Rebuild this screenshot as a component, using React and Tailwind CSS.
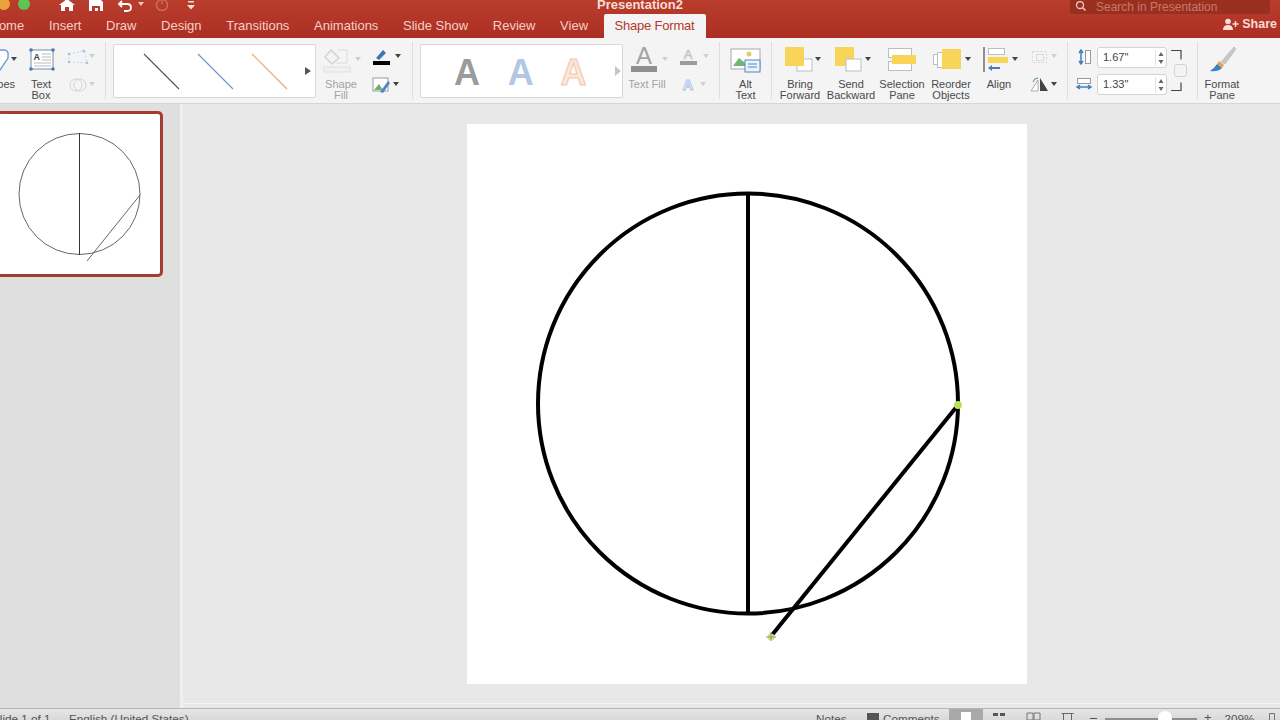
const tabs = ["Home", "Insert", "Draw", "Design", "Transitions", "Animations", "Slide Show", "Review", "View"];

// svg whose viewBox uses the coordinates of the screen, so shapes can be read off the picture
function Art({ x, y = 38, w, h = 41, children, className = "" }) {
  return (
    <svg width={w} height={h} viewBox={`${x} ${y} ${w} ${h}`} className={`block shrink-0 ${className}`}>
      {children}
    </svg>
  );
}

function Caret({ x, y, fill = "#444" }) {
  return <path d={`M${x - 3} ${y - 2}h6l-3 4z`} fill={fill} />;
}

function Cell({ w, label, muted, children }) {
  return (
    <div className="flex shrink-0 flex-col items-center" style={{ width: w }}>
      {children}
      <div className={`text-center text-[11px] leading-[11px] ${muted ? "text-[#a3a3a3]" : "text-[#4a4a4a]"}`}>
        {label.map((line) => (
          <div key={line} className="whitespace-nowrap">{line}</div>
        ))}
      </div>
    </div>
  );
}

function Sep() {
  return <div className="my-[4px] w-px shrink-0 bg-[#dedede]" />;
}

function Spinner() {
  return (
    <svg width="10" height="16" viewBox="0 0 10 16" className="shrink-0">
      <path d="M0.5 0v16" stroke="#e2e2e2" />
      <path d="M3.5 6l2.5-4 2.5 4z M3.5 10l2.5 4 2.5-4z" fill="#666" />
    </svg>
  );
}

function SizeInput({ value }) {
  return (
    <div className="flex h-[21px] w-[70px] items-center justify-between rounded-[3px] border border-[#d4d4d4] bg-white pl-[5px] pr-[1px] text-[11px] text-[#444]">
      {value}
      <Spinner />
    </div>
  );
}

function TitleBar() {
  return (
    <div className="grid h-[14px] grid-cols-[1fr_auto_1fr] overflow-hidden">
      <Art x={0} y={0} w={210} h={14}>
        <circle cx="4" cy="4" r="6" fill="#e9a23b" />
        <circle cx="24" cy="4" r="6" fill="#5fc454" />
        <path d="M59 5l8-6 8 6h-2v6h-4V7h-4v4h-4V5z" fill="#fff" />
        <path d="M89 0h12l2 2v9H89z" fill="#fff" />
        <path d="M92 6h8v5h-8z" fill="#b5382a" />
        <path d="M95 8h3v3h-3z" fill="#fff" />
        <path d="M122 1l-3 3 3 3M119 4h8q4 0 4 3.500t-4 3.500h-3" fill="none" stroke="#fff" strokeWidth="1.800" />
        <Caret x={141} y={4} fill="#f2c9c0" />
        <circle cx="162" cy="5" r="5.500" fill="none" stroke="#cf6f5e" strokeWidth="1.400" />
        <path d="M162 -1v5" stroke="#cf6f5e" strokeWidth="1.400" />
        <path d="M188 1h6v1.500h-6z M187 5h8l-4 4.500z" fill="#f7ddd6" />
      </Art>
      <div className="text-[13px] font-bold leading-[10px] text-[#f9dcd4]">Presentation2</div>
      <div className="flex justify-end pr-[10px]">
        <div className="flex h-[14px] w-[200px] items-center rounded-b-[3px] bg-[#99301f] pl-[5px] text-[12px] text-[#c9776a]">
          <svg width="12" height="12" viewBox="0 0 12 12" className="mr-[9px] shrink-0">
            <circle cx="5" cy="4" r="3.500" fill="none" stroke="#f2c9c0" strokeWidth="1.300" />
            <path d="M7.500 6.500l3 3" stroke="#f2c9c0" strokeWidth="1.500" />
          </svg>
          Search in Presentation
        </div>
      </div>
    </div>
  );
}

function TabRow() {
  return (
    <div className="flex h-[24px] items-end text-[13px] leading-[24px] text-[#f6cfc6]">
      <div className="-ml-[10.500px] flex gap-[24.700px]">
        {tabs.map((tab) => (
          <div key={tab} className="whitespace-nowrap">{tab}</div>
        ))}
      </div>
      <div className="ml-[15.500px] w-[102px] rounded-t-[2px] bg-[#f4f4f4] text-center tracking-[-0.2px] text-[#b5382a]">Shape Format</div>
      <div className="mb-[2px] ml-auto flex items-center gap-[3px] pr-[3px] text-[12.500px] font-bold text-[#f9dcd4]">
        <svg width="16" height="12" viewBox="0 0 16 12">
          <circle cx="5" cy="3.500" r="2.800" fill="#f9dcd4" />
          <path d="M0 12q0-5 5-5t5 5z" fill="#f9dcd4" />
          <path d="M12.500 3v6M9.500 6h6" stroke="#f9dcd4" strokeWidth="1.500" />
        </svg>
        Share
      </div>
    </div>
  );
}

function Ribbon() {
  return (
    <div className="flex h-[66px] border-b border-[#d6d6d6] bg-[#f4f4f4]">
      <div className="flex w-[26px] shrink-0 flex-col items-end overflow-hidden">
        <Art x={0} w={26}>
          <path d="M-6 50h10a4 4 0 0 1 4 5v3l-8 12h-6z" fill="#fff" stroke="#6d97cf" strokeWidth="1.300" />
          <Caret x={14} y={59} />
        </Art>
        <div className="pr-[11px] text-[11px] leading-[11px] text-[#4a4a4a]">Shapes</div>
      </div>
      <Cell w={30} label={["Text", "Box"]}>
        <Art x={26} w={30}>
          <rect x="31" y="50" width="22" height="19" fill="#fff" stroke="#7b8ba6" />
          <text x="33.500" y="60" fontSize="9" fontWeight="700" fill="#444" fontFamily="Liberation Sans">A</text>
          <path d="M42 54h9M42 57h9M42 60h9M34 63h17M34 66h17" stroke="#aaa" strokeWidth="0.800" />
          <g fill="#4c77b2">
            <circle cx="31" cy="50" r="1.800" />
            <circle cx="53" cy="50" r="1.800" />
            <circle cx="31" cy="69" r="1.800" />
            <circle cx="53" cy="69" r="1.800" />
          </g>
        </Art>
      </Cell>
      <Art x={56} w={44} h={65}>
        <path d="M69 54l15-3 3 12-18-1z" fill="none" stroke="#c5d3e6" strokeDasharray="2 2" />
        <g fill="#a9c0de">
          <circle cx="69" cy="54" r="1.300" />
          <circle cx="84" cy="51" r="1.300" />
          <circle cx="87" cy="63" r="1.300" />
          <circle cx="69" cy="62" r="1.300" />
        </g>
        <Caret x={92} y={56} fill="#cfcfcf" />
        <circle cx="76" cy="85" r="6" fill="none" stroke="#d4d4d4" />
        <circle cx="80" cy="85" r="6" fill="none" stroke="#d4d4d4" />
        <Caret x={92} y={84} fill="#cfcfcf" />
      </Art>
      <div className="w-[5px] shrink-0" />
      <Sep />
      <div className="w-[7px] shrink-0" />
      <div className="mt-[6px] h-[54px] w-[203px] shrink-0 rounded-[2px] border border-[#d8d8d8] bg-white">
        <Art x={113} y={44} w={201} h={52}>
          <path d="M143 53l35 35" stroke="#555" strokeWidth="1.100" />
          <path d="M197 53l35 35" stroke="#7393c4" strokeWidth="1.100" />
          <path d="M251 53l35 35" stroke="#e2a86f" strokeWidth="1.100" />
          <path d="M304 66l6 4-6 4z" fill="#555" />
        </Art>
      </div>
      <Cell w={50} label={["Shape", "Fill"]} muted>
        <Art x={316} w={50}>
          <path d="M331 50l8 8-7 6-7-7z" fill="none" stroke="#d2d2d2" strokeWidth="1.400" />
          <path d="M338 50h9v13h-11" fill="none" stroke="#dcdcdc" />
          <rect x="324" y="67" width="26" height="5" fill="#f1f1f1" stroke="#dedede" />
          <Caret x={358} y={59} fill="#cfcfcf" />
        </Art>
      </Cell>
      <Art x={366} w={46} h={65}>
        <path d="M376 58l7-8 3 3-7 7z" fill="#3f74b8" />
        <rect x="373" y="61" width="17" height="4" fill="#000" />
        <Caret x={398} y={56} />
        <rect x="373" y="78" width="15" height="13" fill="#fff" stroke="#999" />
        <path d="M374 90l5-6 4 6z" fill="#6fb06a" />
        <path d="M380 92l8-11 2 2-7 10z" fill="#4f86c6" />
        <Caret x={396} y={84} />
      </Art>
      <Sep />
      <div className="w-[7px] shrink-0" />
      <div className="mt-[6px] flex h-[54px] w-[203px] shrink-0 items-center rounded-[2px] border border-[#d8d8d8] bg-white pl-[33px] pt-[3px] text-[36px] font-bold leading-[48px]">
        <span className="w-[55px] text-[#9b9b9b]">A</span>
        <span className="w-[54px] text-[#b3c6e4]">A</span>
        <span className="w-[55px] text-[#fbe6d8] [-webkit-text-stroke:1px_#f2c8ac]">A</span>
        <svg width="8" height="10" viewBox="0 0 8 10" className="-mt-[3px]"><path d="M1 0l6 5-6 5z" fill="#c4c4c4" /></svg>
      </div>
      <Cell w={48} label={["Text Fill"]} muted>
        <Art x={623} w={48}>
          <text x="644" y="64" fontSize="24" textAnchor="middle" fill="#a3a3a3" fontFamily="Liberation Sans">A</text>
          <rect x="631" y="66" width="26" height="6" fill="#8f8f8f" />
          <Caret x={665} y={59} fill="#cfcfcf" />
        </Art>
      </Cell>
      <Art x={671} w={48} h={65}>
        <text x="688" y="59" fontSize="13" textAnchor="middle" fill="#f4f4f4" stroke="#c4c4c4" strokeWidth="0.700" fontFamily="Liberation Sans">A</text>
        <rect x="680" y="61" width="17" height="4" fill="#9c9c9c" />
        <Caret x={706} y={56} fill="#cfcfcf" />
        <text x="688" y="90" fontSize="15" fontWeight="700" textAnchor="middle" fill="#e6eef8" stroke="#a8c4e6" strokeWidth="0.800" fontFamily="Liberation Sans">A</text>
        <Caret x={703} y={84} fill="#cfcfcf" />
      </Art>
      <Sep />
      <Cell w={51} label={["Alt", "Text"]}>
        <Art x={720} w={51}>
          <rect x="731" y="49" width="29" height="20" fill="#fff" stroke="#a8a8a8" />
          <path d="M733 66l6-8 5 4 3 4z" fill="#6fb76a" />
          <circle cx="749" cy="54" r="2.500" fill="#e8cc6a" />
          <rect x="745" y="60" width="15" height="12" fill="#eaf2fb" stroke="#4f86c6" />
          <path d="M748 64h9M748 67h9" stroke="#4f86c6" />
        </Art>
      </Cell>
      <Sep />
      <Cell w={56} label={["Bring", "Forward"]}>
        <Art x={772} w={56}>
          <rect x="797" y="59" width="15" height="12" fill="#fff" stroke="#bdbdbd" />
          <rect x="785" y="47" width="19" height="19" fill="#f8d558" />
          <Caret x={818} y={59} />
        </Art>
      </Cell>
      <Cell w={46} label={["Send", "Backward"]}>
        <Art x={828} w={46}>
          <rect x="835" y="47" width="19" height="19" fill="#f8d558" />
          <rect x="846" y="59" width="15" height="12" fill="#fff" stroke="#bdbdbd" />
          <Caret x={868} y={59} />
        </Art>
      </Cell>
      <Cell w={56} label={["Selection", "Pane"]}>
        <Art x={874} w={56}>
          <rect x="888.500" y="48.500" width="23" height="9" fill="#fff" stroke="#bdbdbd" />
          <rect x="888.500" y="61.500" width="23" height="9" fill="#fff" stroke="#bdbdbd" />
          <rect x="892" y="55" width="24" height="9" fill="#f8d558" />
        </Art>
      </Cell>
      <Cell w={42} label={["Reorder", "Objects"]}>
        <Art x={930} w={42}>
          <rect x="933.500" y="54.500" width="6" height="10" fill="#fff" stroke="#bdbdbd" />
          <rect x="937.500" y="52.500" width="6" height="15" fill="#fff" stroke="#bdbdbd" />
          <rect x="942" y="49" width="19" height="20" fill="#f8d558" />
          <Caret x={968} y={59} />
        </Art>
      </Cell>
      <Cell w={54} label={["Align"]}>
        <Art x={972} w={54}>
          <path d="M984 47v25" stroke="#666" strokeWidth="1.400" />
          <rect x="988.500" y="48.500" width="16" height="6" fill="#fff" stroke="#bdbdbd" />
          <rect x="988" y="57" width="20" height="6" fill="#f8d558" />
          <path d="M988 68l4-3v2h8v2h-8v2z" fill="#3f7ec4" />
          <Caret x={1015} y={59} />
        </Art>
      </Cell>
      <Art x={1026} w={41} h={65}>
        <rect x="1032.500" y="51.500" width="14" height="11" fill="none" stroke="#d4d4d4" strokeDasharray="2 2" />
        <rect x="1036.500" y="54.500" width="7" height="6" fill="none" stroke="#dcdcdc" />
        <Caret x={1054} y={56} fill="#cfcfcf" />
        <path d="M1031 91l7-11v11z" fill="#fff" stroke="#aaa" />
        <path d="M1040 78l8 13h-8z" fill="#444" />
        <path d="M1033 82q1-4 5-4" fill="none" stroke="#3f9d58" />
        <Caret x={1054} y={84} />
      </Art>
      <Sep />
      <Art x={1068} w={29} h={65}>
        <path d="M1081 50v14M1079 53l2-3 2 3M1079 61l2 3 2-3" fill="none" stroke="#3f7ec4" strokeWidth="1.500" />
        <rect x="1085.500" y="50.500" width="5" height="13" fill="#fff" stroke="#999" />
        <rect x="1077.500" y="78.500" width="13" height="5" fill="#fff" stroke="#999" />
        <path d="M1077 87h14M1080 85l-3 2 3 2M1088 85l3 2-3 2" fill="none" stroke="#3f7ec4" strokeWidth="1.500" />
      </Art>
      <div className="flex w-[70px] shrink-0 flex-col gap-[6px] pt-[9px]">
        <SizeInput value={'1.67"'} />
        <SizeInput value={'1.33"'} />
      </div>
      <Art x={1167} w={30} h={65}>
        <path d="M1171 50.500h10v9" fill="none" stroke="#444" strokeWidth="1.200" />
        <rect x="1174.500" y="64.500" width="12" height="12" rx="2.500" fill="#f4f4f4" stroke="#d2d2d2" />
        <path d="M1171 90.500h10v-8" fill="none" stroke="#444" strokeWidth="1.200" />
      </Art>
      <Sep />
      <Cell w={48} label={["Format", "Pane"]}>
        <Art x={1198} w={48}>
          <path d="M1221 62l13-15 2 2-11 15z" fill="#c8c8c8" stroke="#a8a8a8" strokeWidth="0.500" />
          <path d="M1219 61l5 4-2 3-5-4z" fill="#d9a94f" />
          <path d="M1217 64l5 4q-4 4-12 3 4-2 7-7z" fill="#3f7ec4" />
        </Art>
      </Cell>
    </div>
  );
}

function Thumbnail() {
  return (
    <div className="-ml-[4px] h-[166px] w-[167px] rounded-[5px] border-[3px] border-[#a53c31] bg-white">
      <svg width="160" height="160" viewBox="-1 114 160 160" className="block">
        <g fill="none" stroke="#666" strokeWidth="1">
          <circle cx="79.500" cy="194" r="60.500" />
          <path d="M79.500 133v122" stroke="#333" />
          <path d="M140 195l-53 66" />
        </g>
      </svg>
    </div>
  );
}

function Slide() {
  return (
    <div className="h-[560px] w-[560px] bg-white">
      <svg width="560" height="560" viewBox="467 124 560 560" className="block">
        <g fill="none" stroke="#000" strokeWidth="4">
          <circle cx="748" cy="403.500" r="210" />
          <path d="M748 193v420" />
          <path d="M958 405L772 635" />
        </g>
        <circle cx="958" cy="405" r="4" fill="#b5e655" />
        <circle cx="771" cy="637" r="3.500" fill="#cfe08a" />
        <path d="M771 632v9M766 637h10" stroke="#7d8f4f" strokeWidth="0.800" />
      </svg>
    </div>
  );
}

function StatusBar() {
  return (
    <div className="flex h-[12px] items-start overflow-hidden border-t border-[#b5b5b5] bg-gradient-to-b from-[#e6e6e6] to-[#d9d9d9] text-[11.700px] leading-[13px] text-[#555]">
      <div className="-ml-[8px] mt-[3px] w-[77px] shrink-0">Slide 1 of 1</div>
      <div className="mt-[3px] w-[731px] shrink-0">English (United States)</div>
      <div className="mt-[3px] w-[67px] shrink-0 pl-[16px]">Notes</div>
      <div className="mt-[3px] flex w-[82px] shrink-0 items-start gap-[4px]">
        <div className="mt-[1px] h-[10px] w-[12px] shrink-0 bg-[#555]" />
        Comments
      </div>
      <div className="flex h-[12px] w-[34px] shrink-0 justify-center bg-[#a9a9a9] pt-[3px]">
        <div className="h-[9px] w-[10px] bg-white" />
      </div>
      <Art x={983} y={709} w={96} h={11}>
        <path d="M993 713h5v3h-5z M1000 713h5v3h-5z" fill="#555" />
        <path d="M1027 713h6v7h-6z M1034 713h6v7h-6z" fill="none" stroke="#777" />
        <path d="M1061.500 713.500h12M1063.500 713.500v7h8v-7" fill="none" stroke="#666" />
      </Art>
      <div className="mt-[9px] ml-[11px] h-[1px] w-[7px] bg-[#555]" />
      <div className="relative ml-[8px] mt-[9px] h-[3px] w-[92px] bg-[#8e8e8e]">
        <div className="absolute -top-[7px] left-[53px] h-[14px] w-[14px] rounded-full bg-white" />
      </div>
      <div className="ml-[7px] mt-[2px] text-[13px] leading-[13px]">+</div>
      <div className="ml-[13px] mt-[3px]">209%</div>
      <div className="ml-[14px] mt-[4px] h-[12px] w-[6px] border border-[#777]" />
    </div>
  );
}

export default function App() {
  return (
    <div className="flex h-[720px] w-[1280px] flex-col overflow-hidden bg-[#e8e8e8] font-['Liberation_Sans',Arial,sans-serif]">
      <div className="bg-gradient-to-b from-[#b93d2c] to-[#ac2f24]">
        <TitleBar />
        <TabRow />
      </div>
      <Ribbon />
      <div className="flex min-h-0 flex-1">
        <div className="w-[180px] shrink-0 bg-[#dfdfdf] pt-[7px]">
          <Thumbnail />
        </div>
        <div className="w-[3px] shrink-0 bg-[#f0f0f0]" />
        <div className="flex min-w-0 flex-1 flex-col">
          <div className="flex-1 pl-[284px] pt-[20px]">
            <Slide />
          </div>
          <div className="h-[5px] border-t border-[#f4f4f4]" />
        </div>
      </div>
      <StatusBar />
    </div>
  );
}
